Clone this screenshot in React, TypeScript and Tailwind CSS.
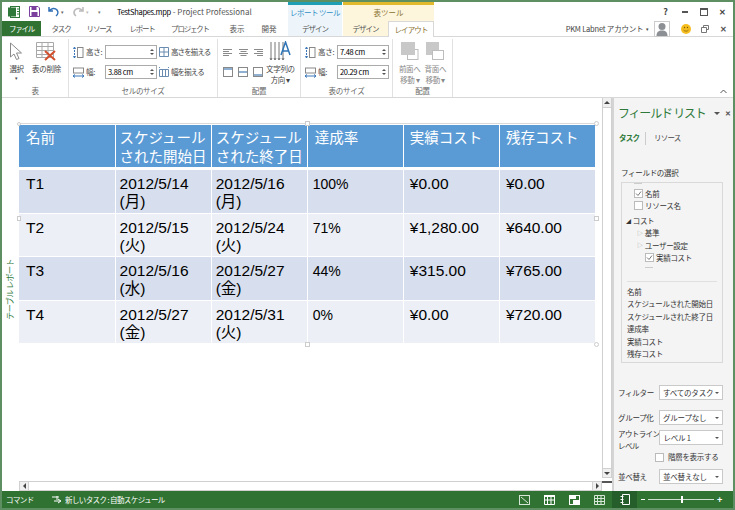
import React from "react";

const font = { fontFamily: '"Noto Sans CJK JP", "Liberation Sans", sans-serif' };
const latin = { fontFamily: '"Liberation Sans", "Noto Sans CJK JP", sans-serif' };

function Stepper({ value }: { value: string }) {
  return (
    <div className="flex h-[14px] w-[52px] shrink-0 items-center justify-between border border-[#ababab] bg-white px-[2px]">
      <span className="whitespace-nowrap text-[7.5px] leading-none text-black">{value}</span>
      <div className="flex flex-col gap-[2px]">
        <span className="h-0 w-0 border-x-[2px] border-b-[2px] border-x-transparent border-b-[#555]" />
        <span className="h-0 w-0 border-x-[2px] border-t-[2px] border-x-transparent border-t-[#555]" />
      </div>
    </div>
  );
}

function HeightIcon() {
  return (
    <svg className="shrink-0" width="11" height="13" viewBox="0 0 11 13">
      <path d="M1.500 1v11" stroke="#3a76b8" strokeWidth="1" strokeDasharray="2 1" />
      <path d="M.5 3L1.500 1 2.500 3M.5 10l1 2 1-2" fill="none" stroke="#3a76b8" />
      <rect x="4.500" y="1.500" width="5.500" height="10" fill="none" stroke="#888" />
    </svg>
  );
}

function WidthIcon() {
  return (
    <svg className="shrink-0" width="11" height="11" viewBox="0 0 11 11">
      <rect x=".5" y="1" width="10" height="5" fill="none" stroke="#888" />
      <path d="M0 9h11M2 7.500L0 9l2 1.500M9 7.500l2 1.500-2 1.500" fill="none" stroke="#3a76b8" />
    </svg>
  );
}

function DistIcon({ rows }: { rows?: boolean }) {
  return (
    <svg className="shrink-0" width="10" height="10" viewBox="0 0 10 10">
      {rows ? (
        <path d="M.5.5h9v9h-9zM.5 5h9M5 .5v9" fill="none" stroke="#6a8cb0" />
      ) : (
        <path d="M.5 2.500h9v7h-9zM3.500 2.500v7M6.500 2.500v7M.5 0v1M9.500 0v1" fill="none" stroke="#6a8cb0" />
      )}
    </svg>
  );
}

function Group({ label, w, children }: { label: string; w: string; children: React.ReactNode }) {
  return (
    <div className={`flex h-full shrink-0 flex-col border-r border-[#e1e1e1] ${w}`}>
      <div className="min-h-0 flex-1">{children}</div>
      <div className="h-[13px] text-center text-[7.5px] leading-[13px] text-[#666]">{label}</div>
    </div>
  );
}

function Tab({ label, w, className = "" }: { label: string; w: string; className?: string }) {
  return (
    <div className={`flex h-full items-center justify-center whitespace-nowrap text-[7.5px] text-[#555] ${w} ${className}`}>
      {label}
    </div>
  );
}

function AlignIcon({ kind }: { kind: "l" | "c" | "r" }) {
  const x2 = kind === "l" ? 0 : kind === "c" ? 1.5 : 3;
  return (
    <svg width="9" height="8" viewBox="0 0 9 8">
      <path d={`M0 .5h9M${x2} 2.500h6M0 4.500h9M${x2} 6.500h6`} stroke="#8a8a8a" strokeWidth="1" />
    </svg>
  );
}

function VAlignIcon({ y }: { y: number }) {
  return (
    <svg width="10" height="10" viewBox="0 0 10 10">
      <rect x=".5" y=".5" width="9" height="9" fill="none" stroke="#888" />
      <rect x="1" y={y} width="8" height="2" fill="#8fb0d0" />
    </svg>
  );
}

function Front({ back }: { back?: boolean }) {
  return (
    <svg width="18" height="18" viewBox="0 0 18 18">
      {back ? (
        <>
          <rect x="0" y="0" width="13" height="13" fill="#c8c8c8" />
          <rect x="6.500" y="8.500" width="11" height="9" fill="#fff" stroke="#bdbdbd" />
        </>
      ) : (
        <>
          <rect x="6.500" y="7.500" width="10.500" height="10" fill="#fff" stroke="#bdbdbd" />
          <rect x="0" y="0" width="14" height="13" fill="#c8c8c8" />
        </>
      )}
    </svg>
  );
}

function Ribbon() {
  return (
    <div className="flex h-[61px] shrink-0 items-stretch border-b border-[#d8d8d8] bg-white pt-[2px] tracking-[-0.3px]">
      <Group label="表" w="w-[67px]">
        <div className="flex justify-center gap-[8px] pt-[3px] text-[7.5px] leading-[11px] text-[#444]">
          <div className="flex flex-col items-center">
            <svg width="15" height="19" viewBox="0 0 15 19">
              <path d="M1.500 1v14l3.500-3 2.500 5.500 2.500-1-2.500-5.500h5z" fill="#fff" stroke="#8a8a8a" />
            </svg>
            <span className="mt-[2px]">選択</span>
            <span className="text-[5px] leading-[7px]">▾</span>
          </div>
          <div className="flex flex-col items-center">
            <svg width="21" height="19" viewBox="0 0 21 19">
              <path d="M.5.5h17v15H.5zM.5 4.500h17M.5 8.500h17M.5 12.500h17M6 .5v15M12 .5v15" fill="none" stroke="#a8a8a8" />
              <path d="M9 9l10 9M19 9L9 18" stroke="#d2502e" strokeWidth="2" />
            </svg>
            <span className="mt-[2px] whitespace-nowrap">表の削除</span>
          </div>
        </div>
      </Group>
      <Group label="セルのサイズ" w="w-[149px]">
        <div className="flex flex-col gap-[6px] pl-[4px] pt-[6px] text-[7.5px] text-[#444]">
          <div className="flex h-[14px] items-center gap-[2px]">
            <HeightIcon />
            <span className="w-[17px] whitespace-nowrap">高さ:</span>
            <Stepper value="" />
            <DistIcon rows />
            <span className="whitespace-nowrap tracking-[-0.9px]">高さを揃える</span>
          </div>
          <div className="flex h-[14px] items-center gap-[2px]">
            <WidthIcon />
            <span className="w-[17px] whitespace-nowrap">幅:</span>
            <Stepper value="3.88 cm" />
            <DistIcon />
            <span className="whitespace-nowrap tracking-[-0.9px]">幅を揃える</span>
          </div>
        </div>
      </Group>
      <Group label="配置" w="w-[83px]">
        <div className="flex gap-[3px] pl-[5px] pt-[2px]">
          <div className="flex w-[40px] flex-col gap-[10px] pt-[8px]">
            <div className="flex justify-between">
              <AlignIcon kind="l" />
              <AlignIcon kind="c" />
              <AlignIcon kind="r" />
            </div>
            <div className="flex justify-between">
              <VAlignIcon y={1} />
              <VAlignIcon y={4} />
              <VAlignIcon y={7} />
            </div>
          </div>
          <div className="flex flex-col items-center text-[7.5px] leading-[11px] text-[#444]">
            <svg width="22" height="21" viewBox="0 0 22 21">
              <path d="M2 1v18M6 1v18M10 1v18M14 1v18" stroke="#777" />
              <path d="M1 17l1 2 1-2M5 17l1 2 1-2M9 17l1 2 1-2M13 17l1 2 1-2" fill="none" stroke="#777" />
              <path d="M12 14L16.500 1 21 14M13.500 10h6" fill="none" stroke="#2f75b5" strokeWidth="1.500" />
            </svg>
            <span className="mt-[1px] whitespace-nowrap">文字列の</span>
            <span className="whitespace-nowrap">方向 ▾</span>
          </div>
        </div>
      </Group>
      <Group label="表のサイズ" w="w-[92px]">
        <div className="flex flex-col gap-[6px] pl-[4px] pt-[6px] text-[7.5px] text-[#444]">
          <div className="flex h-[14px] items-center gap-[2px]">
            <HeightIcon />
            <span className="w-[17px] whitespace-nowrap">高さ:</span>
            <Stepper value="7.48 cm" />
          </div>
          <div className="flex h-[14px] items-center gap-[2px]">
            <WidthIcon />
            <span className="w-[17px] whitespace-nowrap">幅:</span>
            <Stepper value="20.29 cm" />
          </div>
        </div>
      </Group>
      <Group label="配置" w="w-[60px]">
        <div className="flex justify-center gap-[4px] pt-[3px] text-[7.5px] leading-[11px] text-[#888]">
          <div className="flex flex-col items-center whitespace-nowrap">
            <Front />
            <span className="mt-[3px]">前面へ</span>
            <span>移動 ▾</span>
          </div>
          <div className="flex flex-col items-center whitespace-nowrap">
            <Front back />
            <span className="mt-[3px]">背面へ</span>
            <span>移動 ▾</span>
          </div>
        </div>
      </Group>
      <div className="flex flex-1 items-end justify-end pb-[3px] pr-[6px]">
        <svg width="7" height="5" viewBox="0 0 7 5">
          <path d="M.5 4L3.500 1l3 3" fill="none" stroke="#555" />
        </svg>
      </div>
    </div>
  );
}

const rows = [
  ["T1", "2012/5/14", "(月)", "2012/5/16", "(月)", "100%", "¥0.00", "¥0.00"],
  ["T2", "2012/5/15", "(火)", "2012/5/24", "(火)", "71%", "¥1,280.00", "¥640.00"],
  ["T3", "2012/5/16", "(水)", "2012/5/27", "(金)", "44%", "¥315.00", "¥765.00"],
  ["T4", "2012/5/27", "(金)", "2012/5/31", "(火)", "0%", "¥0.00", "¥720.00"],
];
const rowH = ["h-[45px]", "h-[43px]", "h-[44px]", "h-[43px]"];
const headPad = ["pl-[7px]", "pl-[4px]", "pl-[4px]", "pl-[7px]", "pl-[6px]", "pl-[6px]"];
const cell = "border-b border-r border-white pt-[5px] align-top";

function ReportTable() {
  return (
    <div className="relative ml-[2px] mt-[25px] w-[577px] border-t border-[#d9d9d9] pt-[1px]">
      <table className="w-[577px] table-fixed border-collapse text-black">
        <thead>
          <tr className="h-[43px] bg-[#5b9bd5] text-[14.5px] leading-[18.5px] text-white">
            {["名前", "スケジュール|された開始日", "スケジュール|された終了日", "達成率", "実績コスト", "残存コスト"].map((h, i) => (
              <th key={i} className={`border-b-[3px] border-r border-white pt-[3px] text-left align-top font-normal ${headPad[i]}`}>
                {h.split("|").map((t) => (
                  <div key={t} className="whitespace-nowrap">{t}</div>
                ))}
              </th>
            ))}
          </tr>
        </thead>
        <tbody style={latin} className="text-[15.5px] leading-[18.5px]">
          {rows.map((r, i) => (
            <tr key={i} className={`${rowH[i]} ${i % 2 === 0 ? "bg-[#d7deed]" : "bg-[#edeff6]"}`}>
              <td className={`${cell} pl-[7px]`}>{r[0]}</td>
              <td className={`${cell} pl-[4px]`}>
                <div>{r[1]}</div>
                <div>{r[2]}</div>
              </td>
              <td className={`${cell} pl-[4px]`}>
                <div>{r[3]}</div>
                <div>{r[4]}</div>
              </td>
              <td className={`${cell} pl-[5px] text-[14px]`}>{r[5]}</td>
              <td className={`${cell} pl-[6px]`}>{r[6]}</td>
              <td className={`${cell} pl-[6px]`}>{r[7]}</td>
            </tr>
          ))}
        </tbody>
      </table>
      <span className="absolute -left-[2px] -top-[2px] h-[4px] w-[4px] rounded-full border border-[#ccc] bg-white" />
      <span className="absolute -right-[3px] -top-[3px] h-[5px] w-[5px] rounded-full border border-[#ccc] bg-white" />
      <span className="absolute -right-[3px] top-[92px] h-[5px] w-[5px] border border-[#ccc] bg-white" />
      <span className="absolute -left-[2px] top-[92px] h-[5px] w-[4px] border border-[#ccc] bg-white" />
      <span className="absolute -right-[3px] -bottom-[3px] h-[5px] w-[5px] rounded-full border border-[#ccc] bg-white" />
      <span className="absolute -bottom-[3px] left-[286px] h-[5px] w-[5px] border border-[#ccc] bg-white" />
      <span className="absolute -top-[3px] left-[286px] h-[5px] w-[5px] border border-[#ccc] bg-white" />
    </div>
  );
}

function Check({ on }: { on?: boolean }) {
  return (
    <span className="flex h-[9px] w-[9px] shrink-0 items-center justify-center border border-[#bbb] bg-white">
      {on && (
        <svg width="7" height="7" viewBox="0 0 7 7">
          <path d="M1 3.500l2 2 3-4" fill="none" stroke="#777" />
        </svg>
      )}
    </span>
  );
}

function Select({ label }: { label: string }) {
  return (
    <div className="flex h-[15px] w-[64px] shrink-0 items-center justify-between border border-[#c9c9c9] bg-white px-[3px] text-[7.5px] leading-none tracking-[-0.2px] text-[#333]">
      <span className="whitespace-nowrap">{label}</span>
      <span className="h-0 w-0 border-x-[2px] border-t-[2px] border-x-transparent border-t-[#555]" />
    </div>
  );
}

function Tree({ children, pad }: { children: React.ReactNode; pad: string }) {
  return <div className={`flex h-[12.5px] items-center gap-[2px] ${pad}`}>{children}</div>;
}

function Sidebar() {
  return (
    <div className="flex w-[121px] shrink-0 flex-col border-l-[2px] border-[#d4d4d4] bg-[#f4f4f4] pl-[4px] pr-[10px] text-[7.5px] tracking-[-0.3px] text-[#333]">
      <div className="mt-[5px] flex h-[20px] items-center justify-between">
        <span className="whitespace-pre text-[12px] tracking-[-1.2px] text-[#2f7a3a]">フィールド リスト</span>
        <span className="-mr-[8px] flex items-center gap-[5px] text-[7px] text-[#555]">
          <span className="h-0 w-0 border-x-[3px] border-t-[3px] border-x-transparent border-t-[#555]" />
          <span className="font-bold">✕</span>
        </span>
      </div>
      <div className="mt-[9px] flex h-[12px] items-center text-[7.5px] tracking-[-0.8px]">
        <span className="w-[27px] pl-[1px] font-bold text-[#2f7a3a]">タスク</span>
        <span className="h-[13px] w-px bg-[#ccc]" />
        <span className="pl-[8px] text-[#444]">リソース</span>
      </div>
      <div className="mt-[23px] h-[12px] pl-[3px] leading-[12px]">フィールドの選択</div>
      <div className="ml-[3px] mt-[3px] flex h-[181px] flex-col border border-[#d9d9d9] leading-none">
        <div className="relative flex h-[98px] shrink-0 flex-col pt-[4px]">
          <span className="absolute left-[12px] top-0 h-px w-[8px] bg-[#ccc]" />
          <Tree pad="pl-[12px]"><Check on />名前</Tree>
          <Tree pad="pl-[12px]"><Check />リソース名</Tree>
          <div className="mt-[2px]">
            <Tree pad="pl-[4px]"><span className="text-[5px]">◢</span>コスト</Tree>
          </div>
          <Tree pad="pl-[15px]"><span className="text-[6px] text-[#999]">▷</span>基準</Tree>
          <Tree pad="pl-[15px]"><span className="text-[6px] text-[#999]">▷</span>ユーザー設定</Tree>
          <Tree pad="pl-[23px]"><Check on />実績コスト</Tree>
          <span className="absolute left-[23px] top-[84px] h-px w-[8px] bg-[#ccc]" />
        </div>
        <div className="mx-[5px] border-t border-[#e0e0e0] pt-[4px] text-[7.5px] leading-[12.4px]">
          <div>名前</div>
          <div className="whitespace-nowrap">スケジュールされた開始日</div>
          <div className="whitespace-nowrap">スケジュールされた終了日</div>
          <div>達成率</div>
          <div>実績コスト</div>
          <div>残存コスト</div>
        </div>
      </div>
      <div className="mt-[22px] flex items-center justify-between">
        <span>フィルター</span>
        <Select label="すべてのタスク" />
      </div>
      <div className="mt-[10px] flex items-center justify-between">
        <span>グループ化</span>
        <Select label="グループなし" />
      </div>
      <div className="mt-[5px] flex h-[22px] items-start justify-between">
        <span className="-mt-[2px] whitespace-nowrap leading-[12px] tracking-[-0.6px]">アウトライン<br />レベル</span>
        <Select label="レベル 1" />
      </div>
      <div className="flex h-[10px] items-center gap-[4px] pl-[37px]">
        <Check />
        <span className="whitespace-nowrap">階層を表示する</span>
      </div>
      <div className="mt-[7px] flex items-center justify-between">
        <span>並べ替え</span>
        <Select label="並べ替えなし" />
      </div>
    </div>
  );
}

function VScroll() {
  return (
    <div className="mb-[3px] flex w-[10px] shrink-0 flex-col justify-between border-x border-[#d0d0d0] bg-white">
      <div className="flex h-[10px] items-center justify-center border-b border-[#d0d0d0] bg-[#f0f0f0]">
        <span className="h-0 w-0 border-x-[3px] border-b-[3px] border-x-transparent border-b-[#444]" />
      </div>
      <div className="flex h-[10px] items-center justify-center border-y border-[#d0d0d0] bg-[#f0f0f0]">
        <span className="h-0 w-0 border-x-[3px] border-t-[3px] border-x-transparent border-t-[#444]" />
      </div>
    </div>
  );
}

function StatusIcon({ children, active }: { children: React.ReactNode; active?: boolean }) {
  return (
    <div className={`flex h-full w-[25px] items-center justify-center ${active ? "bg-[#255d2b]" : ""}`}>{children}</div>
  );
}

export default function App() {
  return (
    <div style={font} className="flex h-[510px] w-[735px] flex-col overflow-hidden border-[2px] border-[#5d8f63] bg-white">
      <div className="flex h-[19px] shrink-0 items-center bg-white">
        <div className="flex w-[286px] shrink-0 items-center pl-[6px]">
          <svg className="shrink-0" width="12" height="12" viewBox="0 0 12 12">
            <rect x="2.500" y=".5" width="9" height="11" fill="#fff" stroke="#2f7a3a" />
            <rect x="0" y="1.500" width="8" height="9" fill="#2f7a3a" />
            <path d="M9 3h2M9 5.500h2M9 8h2" stroke="#2f7a3a" />
          </svg>
          <svg className="ml-[9px] shrink-0" width="11" height="11" viewBox="0 0 11 11">
            <path d="M.5.5h8.500l1.500 1.500v8.500H.5z" fill="#fff" stroke="#7b3f9d" />
            <rect x="2.500" y="1" width="5" height="3" fill="#7b3f9d" />
            <rect x="2.500" y="6" width="6" height="4" fill="#7b3f9d" />
          </svg>
          <svg className="ml-[8px] shrink-0" width="11" height="11" viewBox="0 0 11 11">
            <path d="M1 1v4h4M1.500 5C3 2 7 1.500 9 4c1.500 2 1 4.500-1 6" fill="none" stroke="#2f6fb5" strokeWidth="1.500" />
          </svg>
          <span className="ml-[2px] text-[5px] text-[#666]">▾</span>
          <svg className="ml-[9px] shrink-0" width="11" height="11" viewBox="0 0 11 11">
            <path d="M10 1v4H6M9.500 5C8 2 4 1.500 2 4c-1.500 2-1 4.500 1 6" fill="none" stroke="#bbb" strokeWidth="1.500" />
          </svg>
          <span className="ml-[2px] text-[5px] text-[#bbb]">▾</span>
          <span className="ml-[9px] text-[5px] text-[#777]">▾</span>
          <span className="ml-[16px] whitespace-nowrap text-[8px] text-[#555]">
            <span className="text-[7.5px] tracking-[-0.3px] text-black">TestShapes.mpp</span> - Project Professional
          </span>
        </div>
        <div className="flex h-full w-[54px] shrink-0 items-center justify-center whitespace-nowrap border-t-[3px] border-[#1e9fb4] bg-[#edf5fb] text-[7.5px] tracking-[-0.5px] text-[#2f8fc5]">
          レポート ツール
        </div>
        <div className="ml-[1px] flex h-full w-[91px] shrink-0 items-center justify-center whitespace-nowrap border-t-[3px] border-[#e0b92c] bg-[#fdf6dc] text-[7.5px] text-[#8a7230]">
          表ツール
        </div>
        <div className="flex flex-1 items-center justify-end pr-[1px] text-[#444]">
          <span className="flex w-[19px] justify-center text-[9px] font-bold leading-none">?</span>
          <span className="flex w-[19px] justify-center"><span className="h-[2px] w-[6px] bg-[#555]" /></span>
          <span className="flex w-[19px] justify-center"><span className="h-[8px] w-[8px] border border-t-[2px] border-[#555]" /></span>
          <span className="flex w-[19px] justify-center text-[8px] font-bold leading-none">✕</span>
        </div>
      </div>
      <div className="flex h-[16px] shrink-0 items-stretch border-b border-[#d8d8d8] bg-white">
        <div className="flex w-[39px] items-center justify-center bg-[#2f7232] text-[7.5px] tracking-[-1.2px] text-white">ファイル</div>
        <Tab label="タスク" w="w-[40px]" className="tracking-[-1.2px]" />
        <Tab label="リソース" w="w-[36px]" className="tracking-[-1.2px]" />
        <Tab label="レポート" w="w-[50px]" className="tracking-[-1.2px]" />
        <Tab label="プロジェクト" w="w-[46px]" className="tracking-[-1.2px]" />
        <Tab label="表示" w="w-[48px]" />
        <Tab label="開発" w="w-[16px]" className="mr-[11px]" />
        <Tab label="デザイン" w="w-[54px]" className="bg-[#edf5fb] tracking-[-1px]" />
        <Tab label="デザイン" w="w-[45px]" className="ml-[1px] bg-[#fdf6dc] tracking-[-1px]" />
        <div className="-mb-px flex w-[46px] items-center justify-center whitespace-nowrap border-x border-t border-[#d8d8d8] bg-white text-[7.5px] tracking-[-0.9px] text-[#8a7230]">レイアウト</div>
        <div className="flex flex-1 items-center justify-end text-[7.5px] tracking-[-0.2px] text-[#444]">
          <span className="whitespace-nowrap">PKM Labnet アカウント</span>
          <span className="ml-[3px] text-[5px]">▾</span>
          <svg className="ml-[5px] shrink-0" width="16" height="16" viewBox="0 0 16 16">
            <rect x=".5" y=".5" width="15" height="15" fill="#fff" stroke="#ccc" />
            <circle cx="8" cy="5.500" r="3.500" fill="#8c8f93" />
            <path d="M2.500 15c0-4 2-5.500 5.500-5.500s5.500 1.500 5.500 5.500z" fill="#8c8f93" />
          </svg>
          <svg className="ml-[11px] shrink-0" width="10" height="10" viewBox="0 0 10 10">
            <circle cx="5" cy="5" r="5" fill="#f5bd1f" />
            <circle cx="3.500" cy="3.500" r=".7" fill="#7a5a00" />
            <circle cx="6.500" cy="3.500" r=".7" fill="#7a5a00" />
            <path d="M2.500 6c1 1.500 4 1.500 5 0" fill="none" stroke="#7a5a00" strokeWidth=".7" />
          </svg>
          <svg className="ml-[10px] shrink-0" width="8" height="8" viewBox="0 0 8 8">
            <path d="M2.500 2V.5h5v4H6M.5 2.500h5v5h-5z" fill="none" stroke="#777" />
          </svg>
          <span className="ml-[11px] mr-[6px] text-[8px] font-bold leading-none text-[#555]">✕</span>
        </div>
      </div>
      <Ribbon />
      <div className="flex min-h-0 flex-1 bg-white">
        <div className="flex min-w-0 flex-1 flex-col">
          <div className="flex min-h-0 flex-1">
            <div className="flex w-[15px] shrink-0 items-center justify-center">
              <span className="whitespace-nowrap text-[8px] tracking-[-0.5px] text-[#2f7a3a] [text-orientation:sideways] [transform:rotate(180deg)] [writing-mode:vertical-rl]">テーブル レポート</span>
            </div>
            <div className="min-w-0 flex-1">
              <ReportTable />
            </div>
            <VScroll />
          </div>
          <div className="relative ml-[17px] mr-[10px] flex h-[10px] shrink-0 items-center justify-between border-y border-[#d0d0d0] bg-white">
            <span className="flex h-full w-[10px] items-center justify-center border-x border-[#d0d0d0] bg-[#f0f0f0]">
              <span className="h-0 w-0 border-y-[3px] border-r-[3px] border-y-transparent border-r-[#444]" />
            </span>
            <span className="flex h-full w-[10px] items-center justify-center border-x border-[#d0d0d0] bg-[#f0f0f0]">
              <span className="h-0 w-0 border-y-[3px] border-l-[3px] border-y-transparent border-l-[#444]" />
            </span>
            <span className="absolute -right-[10px] -top-px h-[2px] w-[10px] bg-[#555]" />
          </div>
        </div>
        <Sidebar />
      </div>
      <div className="flex h-[17px] shrink-0 items-center bg-[#2f7232] text-[7.5px] tracking-[-0.6px] text-white">
        <span className="w-[50px] shrink-0 pl-[4px]">コマンド</span>
        <svg className="shrink-0" width="10" height="8" viewBox="0 0 10 8">
          <path d="M0 1h7M5 0v4M2 5h6M6 3l3 2-3 2" fill="none" stroke="#fff" />
        </svg>
        <span className="ml-[3px] whitespace-nowrap">新しいタスク : 自動スケジュール</span>
        <div className="ml-auto flex h-full items-center">
          <StatusIcon>
            <svg width="11" height="10" viewBox="0 0 11 10"><rect x=".5" y=".5" width="10" height="9" fill="none" stroke="#d6e6d6" /><path d="M2 2l7 6" stroke="#d6e6d6" /></svg>
          </StatusIcon>
          <StatusIcon>
            <svg width="11" height="10" viewBox="0 0 11 10"><rect x="0" y="0" width="11" height="2" fill="#fff" /><path d="M.5 2v7.500h10V2M3.500 2v7M7 2v7M1 5h9" fill="none" stroke="#fff" /></svg>
          </StatusIcon>
          <StatusIcon>
            <svg width="11" height="10" viewBox="0 0 11 10"><rect x=".5" y=".5" width="10" height="9" fill="#2f7232" stroke="#fff" /><rect x="1" y="1" width="6" height="3" fill="#fff" /><rect x="4" y="5" width="6" height="4" fill="#fff" /></svg>
          </StatusIcon>
          <StatusIcon>
            <svg width="11" height="10" viewBox="0 0 11 10"><path d="M.5.5h10v9H.5zM.5 3.500h10M.5 6.500h10M3.500.5v9M7 .5v9" fill="none" stroke="#d6e6d6" /></svg>
          </StatusIcon>
          <StatusIcon active>
            <svg width="10" height="11" viewBox="0 0 10 11"><path d="M2.500.5h7v10h-7zM.5 2.500h3M.5 5.500h3M.5 8.500h3" fill="none" stroke="#fff" /></svg>
          </StatusIcon>
          <div className="flex w-[96px] items-center pl-[4px] font-bold">
            <span className="h-px w-[4px] bg-white" />
            <span className="relative ml-[3px] h-px w-[66px] bg-[#cfe0cf]">
              <span className="absolute left-[33px] -top-[3px] h-[7px] w-[2px] bg-white" />
            </span>
            <span className="ml-[3px] text-[9px] leading-none">+</span>
          </div>
        </div>
      </div>
    </div>
  );
}
